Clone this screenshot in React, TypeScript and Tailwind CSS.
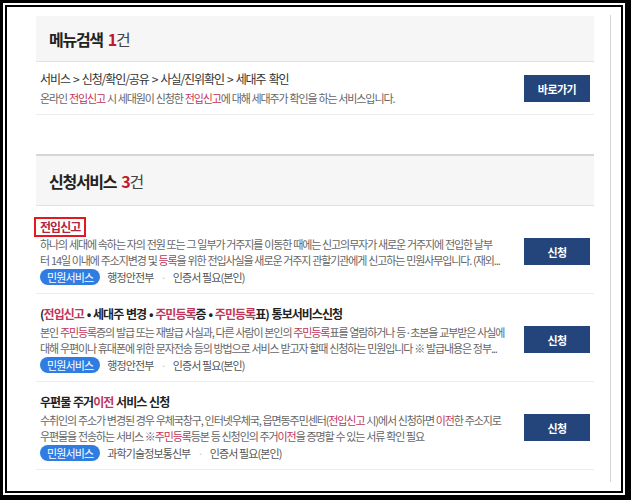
import React from 'react';

const R = ({ children }: { children: React.ReactNode }) => (
  <span className="text-[#c0365a]">{children}</span>
);

const Tags = ({ org }: { org: string }) => (
  <div className="flex items-center h-[18px] text-[11px] tracking-[-0.08em]">
    <span className="bg-[#2f7de3] text-white rounded-full h-[16px] leading-[16px] px-[7px]">민원서비스</span>
    <span className="ml-[7px] text-[#555]">{org}</span>
    <span className="mx-[7px] text-[#ccc]">·</span>
    <span className="text-[#555]">인증서 필요(본인)</span>
  </div>
);

const ApplyButton = ({ label }: { label: string }) => (
  <button className="w-[66px] h-[27px] bg-[#23457b] text-white text-[11px] font-bold shrink-0 tracking-[-0.05em]">
    {label}
  </button>
);

const Item = ({
  title,
  lines,
  org,
}: {
  title: React.ReactNode;
  lines: React.ReactNode[];
  org: string;
}) => (
  <div className="flex items-center border-b border-[#ececec] pt-[11px] pb-[7px]">
    <div className="flex-1 min-w-0 pl-[4px]">
      <div className="h-[18px] leading-[18px] text-[12px] font-bold text-[#222] tracking-[-0.08em] [word-spacing:1px] whitespace-nowrap">
        {title}
      </div>
      <div className="mt-[1px] text-[11px] leading-[16px] text-[#666] tracking-[-0.1em] [word-spacing:0.5px]">
        {lines.map((l, i) => (
          <div key={i} className="whitespace-nowrap overflow-hidden">
            {l}
          </div>
        ))}
      </div>
      <Tags org={org} />
    </div>
    <div className="pl-[16px] pr-[4px]">
      <ApplyButton label="신청" />
    </div>
  </div>
);

export default function App() {
  return (
    <div className="w-[631px] h-[500px] bg-white border-black border-l-[3px] border-t-[3px] border-r-[6px] border-b-[5px] p-[2px] font-['Noto_Sans_CJK_KR','Noto_Sans',sans-serif]">
      <div className="h-full border-2 border-black bg-white">
        <div className="ml-[29px] mt-[8px] w-[575px] h-[467px] pr-[16px] pt-[1px] border-r border-[#d4d4d4]">
          {/* 메뉴검색 */}
          <div className="h-[46px] bg-[#f6f6f6] border-b border-[#e2e2e2] flex items-center pl-[13px] text-[16px] tracking-[-0.08em]">
            <span className="font-bold text-[#222]">메뉴검색</span>
            <span className="ml-[5px] font-bold text-[#c0182f]">1</span>
            <span className="text-[#444]">건</span>
          </div>
          <div className="flex items-center border-b border-[#ececec] pt-[8px] pb-[7px]">
            <div className="flex-1 min-w-0 pl-[4px]">
              <div className="leading-[18px] text-[12px] text-[#333] tracking-[-0.09em] [word-spacing:1.5px] whitespace-nowrap">
                서비스 &gt; 신청/확인/공유 &gt; 사실/진위확인 &gt; 세대주 확인
              </div>
              <div className="mt-[1px] leading-[18px] text-[11px] text-[#666] tracking-[-0.1em] [word-spacing:0.5px] whitespace-nowrap">
                온라인 <R>전입신고</R> 시 세대원이 신청한 <R>전입신고</R>에 대해 세대주가 확인을 하는 서비스입니다.
              </div>
            </div>
            <div className="pr-[4px]">
              <ApplyButton label="바로가기" />
            </div>
          </div>

          {/* 신청서비스 */}
          <div className="mt-[39px] h-[52px] bg-[#f6f6f6] border-t-2 border-[#d6d6d6] border-b border-b-[#e2e2e2] flex items-center pl-[13px] text-[16px] tracking-[-0.08em]">
            <span className="font-bold text-[#222]">신청서비스</span>
            <span className="ml-[5px] font-bold text-[#c0182f]">3</span>
            <span className="text-[#444]">건</span>
          </div>

          <Item
            title={
              <span className="inline-block border-2 border-[#e3191f] leading-[16px] px-[4px] -ml-[6px] text-[#b3253f] font-bold">
                전입신고
              </span>
            }
            lines={[
              <>하나의 세대에 속하는 자의 전원 또는 그 일부가 거주지를 이동한 때에는 신고의무자가 새로운 거주지에 전입한 날부</>,
              <>터 14일 이내에 주소지변경 및 <R>등록</R>을 위한 전입사실을 새로운 거주지 관할기관에게 신고하는 민원사무입니다. (재외...</>,
            ]}
            org="행정안전부"
          />
          <Item
            title={
              <>
                (<R>전입신고</R> • 세대주 변경 • <R>주민등록</R>증 • <R>주민등록</R>표) 통보서비스신청
              </>
            }
            lines={[
              <>본인 <R>주민등록</R>증의 발급 또는 재발급 사실과, 다른 사람이 본인의 <R>주민등록</R>표를 열람하거나 등·초본을 교부받은 사실에</>,
              <>대해 우편이나 휴대폰에 위한 문자전송 등의 방법으로 서비스 받고자 할때 신청하는 민원입니다 ※ 발급내용은 정부...</>,
            ]}
            org="행정안전부"
          />
          <Item
            title={
              <>
                우편물 주거<R>이전</R> 서비스 신청
              </>
            }
            lines={[
              <>수취인의 주소가 변경된 경우 우체국창구, 인터넷우체국, 읍면동주민센터(<R>전입신고</R> 시)에서 신청하면 <R>이전</R>한 주소지로</>,
              <>우편물을 전송하는 서비스 ※<R>주민등록</R>등본 등 신청인의 주거<R>이전</R>을 증명할 수 있는 서류 확인 필요</>,
            ]}
            org="과학기술정보통신부"
          />
        </div>
      </div>
    </div>
  );
}
